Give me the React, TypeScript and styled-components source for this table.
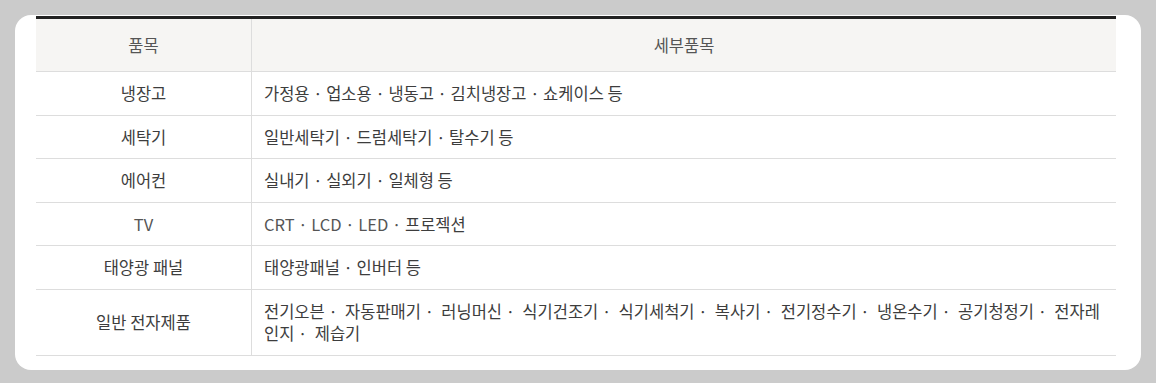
import React from "react";
import styled, { createGlobalStyle } from "styled-components";

const GlobalStyle = createGlobalStyle`
  html, body {
    margin: 0;
    padding: 0;
    background: #cbcbcb;
  }
  body {
    font-family: "Noto Sans CJK KR", "Liberation Sans", sans-serif;
  }
`;

const Page = styled.div`
  padding: 15px;
`;

const Card = styled.div`
  background: #fff;
  border-radius: 16px;
  padding: 1px 25px 14px 21px;
`;

const Table = styled.table`
  width: 100%;
  border-collapse: collapse;
  border-top: 3px solid #222;
  font-size: 16.5px;
  color: #3d3d3d;
`;

const HeadCell = styled.th<{ $first?: boolean }>`
  background: #f6f5f3;
  font-weight: normal;
  color: #555;
  height: 52px;
  padding: 0 12px;
  line-height: 23px;
  text-align: center;
  border-bottom: 1px solid #ddd;
  border-left: ${(p) => (p.$first ? "none" : "1px solid #ddd")};
  width: ${(p) => (p.$first ? "191px" : "auto")};
`;

const NameCell = styled.td`
  text-align: center;
  padding: 10px 12px;
  line-height: 22.5px;
  border-bottom: 1px solid #ddd;
`;

const ItemCell = styled.td`
  text-align: left;
  padding: 10px 12px;
  line-height: 22.5px;
  border-bottom: 1px solid #ddd;
  border-left: 1px solid #ddd;
`;

const Latin = styled.span`
  color: #555;
`;

const rows: [string, React.ReactNode][] = [
  ["냉장고", "가정용 · 업소용 · 냉동고 · 김치냉장고 · 쇼케이스 등"],
  ["세탁기", "일반세탁기 · 드럼세탁기 · 탈수기 등"],
  ["에어컨", "실내기 · 실외기 · 일체형 등"],
  [
    "TV",
    <>
      <Latin>CRT · LCD · LED · </Latin>프로젝션
    </>,
  ],
  ["태양광 패널", "태양광패널 · 인버터 등"],
  [
    "일반 전자제품",
    "전기오븐 ·\u00a0 자동판매기 ·\u00a0 러닝머신 ·\u00a0 식기건조기 ·\u00a0 식기세척기 ·\u00a0 복사기 ·\u00a0 전기정수기 ·\u00a0 냉온수기 ·\u00a0 공기청정기 ·\u00a0 전자레인지 ·\u00a0 제습기",
  ],
];

export default function App() {
  return (
    <Page>
      <GlobalStyle />
      <Card>
        <Table>
          <thead>
            <tr>
              <HeadCell $first>품목</HeadCell>
              <HeadCell>세부품목</HeadCell>
            </tr>
          </thead>
          <tbody>
            {rows.map(([name, items]) => (
              <tr key={name}>
                <NameCell>{name === "TV" ? <Latin>TV</Latin> : name}</NameCell>
                <ItemCell>{items}</ItemCell>
              </tr>
            ))}
          </tbody>
        </Table>
      </Card>
    </Page>
  );
}
